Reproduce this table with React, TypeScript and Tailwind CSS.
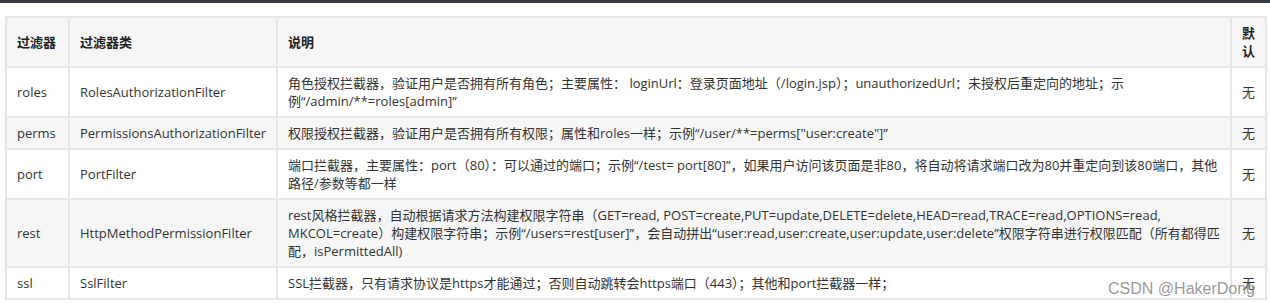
const rows = [
  {
    name: 'roles',
    cls: 'RolesAuthorizationFilter',
    desc: '角色授权拦截器，验证用户是否拥有所有角色；主要属性： loginUrl：登录页面地址（/login.jsp）；unauthorizedUrl：未授权后重定向的地址；示例“/admin/**=roles[admin]”',
  },
  {
    name: 'perms',
    cls: 'PermissionsAuthorizationFilter',
    desc: '权限授权拦截器，验证用户是否拥有所有权限；属性和roles一样；示例“/user/**=perms["user:create"]”',
  },
  {
    name: 'port',
    cls: 'PortFilter',
    desc: '端口拦截器，主要属性：port（80）：可以通过的端口；示例“/test= port[80]”，如果用户访问该页面是非80，将自动将请求端口改为80并重定向到该80端口，其他路径/参数等都一样',
  },
  {
    name: 'rest',
    cls: 'HttpMethodPermissionFilter',
    desc: 'rest风格拦截器，自动根据请求方法构建权限字符串（GET=read, POST=create,PUT=update,DELETE=delete,HEAD=read,TRACE=read,OPTIONS=read, MKCOL=create）构建权限字符串；示例“/users=rest[user]”，会自动拼出“user:read,user:create,user:update,user:delete”权限字符串进行权限匹配（所有都得匹配，isPermittedAll)',
  },
  {
    name: 'ssl',
    cls: 'SslFilter',
    desc: 'SSL拦截器，只有请求协议是https才能通过；否则自动跳转会https端口（443）；其他和port拦截器一样；',
  },
];

const App = () => {
  return (
    <div className="relative w-[1270px] h-[303px] overflow-hidden bg-white font-['Open_Sans','Noto_Sans_CJK_SC',sans-serif] text-[13px] leading-[18px] text-[#333]">
      {/* top bar */}
      <div className="h-[3px] bg-[#363b40]" />

      <table className="ml-[5px] mt-[13px] w-[1260px] table-fixed border-collapse border-2 border-[#e4e6e9]">
        <colgroup>
          <col className="w-[63px]" />
          <col className="w-[208px]" />
          <col className="w-[954px]" />
          <col className="w-[35px]" />
        </colgroup>
        <thead>
          <tr className="bg-[#f6f6f7] font-bold text-[#222]">
            <th className="border-2 border-[#e4e6e9] px-[10px] py-[6px] text-left align-middle">过滤器</th>
            <th className="border-2 border-[#e4e6e9] px-[10px] py-[6px] text-left align-middle">过滤器类</th>
            <th className="border-2 border-[#e4e6e9] px-[10px] py-[6px] text-left align-middle">说明</th>
            <th className="border-2 border-[#e4e6e9] px-[10px] py-[6px] text-left align-middle">默认</th>
          </tr>
        </thead>
        <tbody>
          {rows.map((row, i) => (
            <tr key={row.name} className={i % 2 === 1 ? 'bg-[#f6f6f7]' : 'bg-white'}>
              <td className="border-2 border-[#e4e6e9] px-[10px] py-[6px] align-middle">{row.name}</td>
              <td className="border-2 border-[#e4e6e9] px-[10px] py-[6px] align-middle">{row.cls}</td>
              <td className="border-2 border-[#e4e6e9] px-[10px] py-[6px] align-middle">{row.desc}</td>
              <td className="border-2 border-[#e4e6e9] px-[10px] py-[6px] align-middle">无</td>
            </tr>
          ))}
        </tbody>
      </table>

      {/* watermark */}
      <div className="absolute right-[15px] top-[280px] font-['Liberation_Sans',sans-serif] text-[16px] leading-[18px] text-[#8c8c8c]/90">
        CSDN @HakerDong
      </div>
    </div>
  );
};

export default App;
